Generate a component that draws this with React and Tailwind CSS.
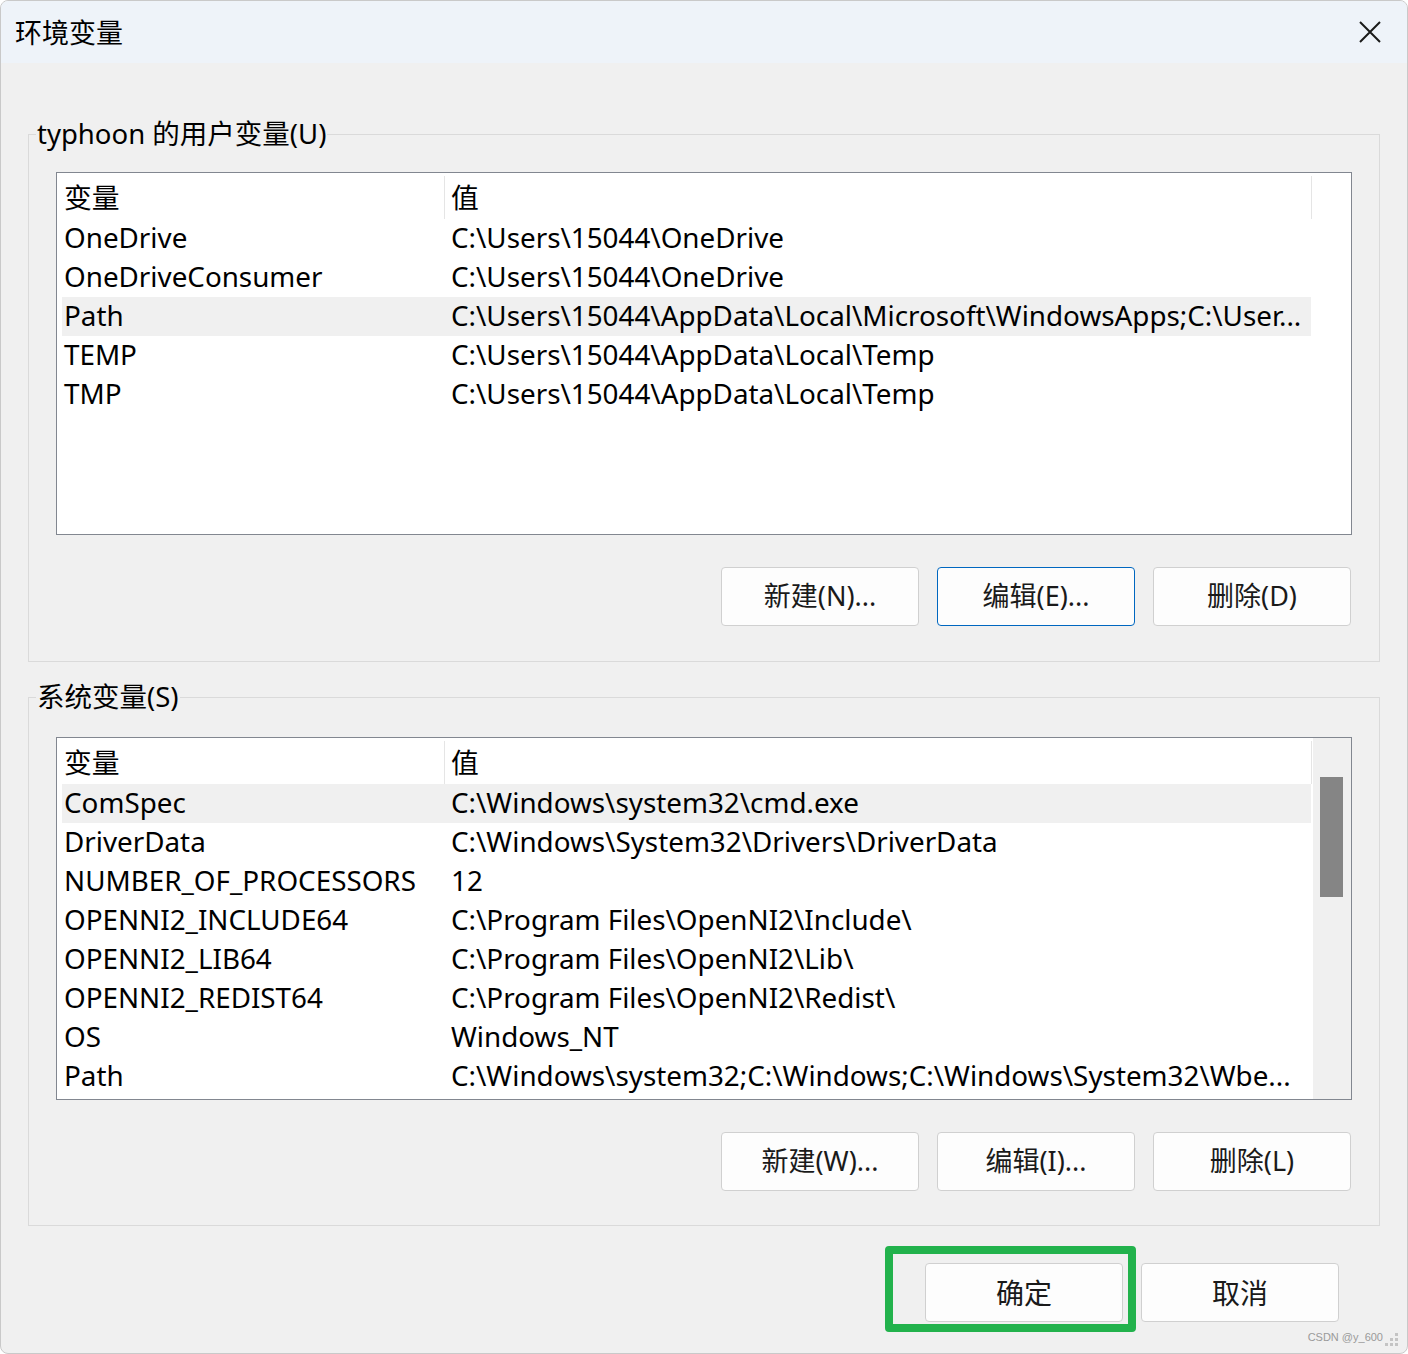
import React from 'react';

const FONT = "font-['Noto_Sans','Noto_Sans_CJK_SC',sans-serif]";

const userVars = [
  ['OneDrive', 'C:\\Users\\15044\\OneDrive'],
  ['OneDriveConsumer', 'C:\\Users\\15044\\OneDrive'],
  ['Path', 'C:\\Users\\15044\\AppData\\Local\\Microsoft\\WindowsApps;C:\\User...'],
  ['TEMP', 'C:\\Users\\15044\\AppData\\Local\\Temp'],
  ['TMP', 'C:\\Users\\15044\\AppData\\Local\\Temp'],
];

const systemVars = [
  ['ComSpec', 'C:\\Windows\\system32\\cmd.exe'],
  ['DriverData', 'C:\\Windows\\System32\\Drivers\\DriverData'],
  ['NUMBER_OF_PROCESSORS', '12'],
  ['OPENNI2_INCLUDE64', 'C:\\Program Files\\OpenNI2\\Include\\'],
  ['OPENNI2_LIB64', 'C:\\Program Files\\OpenNI2\\Lib\\'],
  ['OPENNI2_REDIST64', 'C:\\Program Files\\OpenNI2\\Redist\\'],
  ['OS', 'Windows_NT'],
  ['Path', 'C:\\Windows\\system32;C:\\Windows;C:\\Windows\\System32\\Wbe...'],
];

function Button({ children, focused, className = '' }) {
  return (
    <button
      type="button"
      className={`h-[59px] w-[198px] rounded-[4px] border bg-[#fdfdfd] text-[27px] text-[#1a1a1a] ${focused ? 'border-[#0067c0]' : 'border-[#d0d0d0]'} ${className}`}
    >
      {children}
    </button>
  );
}

function VarList({ rows, selected, scrollbar }) {
  return (
    <div className="flex h-[363px] w-[1296px] overflow-hidden border border-[#828790] bg-white text-[27.8px]">
      <div className="w-[1255px] shrink-0">
        {/* Header */}
        <div className="flex h-[46px] items-center pt-[2px]">
          <div className="h-[43px] w-[388px] border-r border-[#e5e5e5] pl-[7px] leading-[43px]">变量</div>
          <div className="h-[43px] flex-1 border-r border-[#e5e5e5] pl-[6px] leading-[43px]">值</div>
        </div>
        {rows.map(([name, value], i) => (
          <div
            key={name + i}
            className={`ml-[5px] mr-[1px] flex h-[39px] items-center whitespace-nowrap pb-[1px] ${i === selected ? 'bg-[#f0f0f0]' : ''}`}
          >
            <div className="w-[382px] shrink-0 pl-[2px]">{name}</div>
            <div className="flex-1 overflow-hidden pl-[7px]">{value}</div>
          </div>
        ))}
      </div>
      {scrollbar ? (
        <div className="flex-1 border-l border-white bg-[#f0f0f0] pt-[39px] pl-[7px]">
          <div className="h-[120px] w-[23px] bg-[#858585]" />
        </div>
      ) : (
        <div className="flex-1" />
      )}
    </div>
  );
}

function Group({ title, children, className = '' }) {
  return (
    <fieldset className={`mx-[27px] border border-[#dadada] px-[27px] ${className}`}>
      <legend className="-ml-[20px] px-[1px] text-[27.5px] leading-[36px]">{title}</legend>
      {children}
    </fieldset>
  );
}

export default function App() {
  return (
    <div className={`h-[1354px] w-[1408px] bg-white ${FONT} text-[27px] text-black`}>
      <div className="flex h-full flex-col overflow-hidden rounded-[8px] border border-[#c9c9c9] bg-[#f0f0f0]">
        {/* Title bar */}
        <div className="flex h-[62px] shrink-0 items-center justify-between bg-[#eef3f9] pl-[14px] pr-[26px]">
          <span className="text-[27px] leading-none">环境变量</span>
          <svg width="22" height="22" viewBox="0 0 22 22" className="text-[#1a1a1a]">
            <path d="M1 1 L21 21 M21 1 L1 21" stroke="currentColor" strokeWidth="2" />
          </svg>
        </div>

        {/* User variables */}
        <Group title="typhoon 的用户变量(U)" className="mt-[53px] pt-[20px] pb-[35px]">
          <VarList rows={userVars} selected={2} />
          <div className="mt-[32px] flex justify-end gap-[18px] pr-[1px]">
            <Button>新建(N)...</Button>
            <Button focused>编辑(E)...</Button>
            <Button>删除(D)</Button>
          </div>
        </Group>

        {/* System variables */}
        <Group title="系统变量(S)" className="mt-[17px] pt-[22px] pb-[34px]">
          <VarList rows={systemVars} selected={0} scrollbar />
          <div className="mt-[32px] flex justify-end gap-[18px] pr-[1px]">
            <Button>新建(W)...</Button>
            <Button>编辑(I)...</Button>
            <Button>删除(L)</Button>
          </div>
        </Group>

        {/* Dialog buttons */}
        <div className="mt-[37px] flex justify-end gap-[18px] pr-[68px]">
          <div className="relative">
            <Button className="text-[28px]">确定</Button>
            {/* highlight annotation */}
            <div className="pointer-events-none absolute -left-[40px] -top-[17px] h-[86px] w-[251px] rounded-[4px] border-[8px] border-[#22b24c]" />
          </div>
          <Button className="text-[28px]">取消</Button>
        </div>

        <div className="mt-auto flex items-end justify-end gap-[2px] pb-[6px] pr-[8px]">
          <span className="mb-[4px] font-['Liberation_Sans',sans-serif] text-[11px] leading-none text-[#9a9a9a]">CSDN @y_600</span>
          <svg width="14" height="14" viewBox="0 0 14 14" className="text-[#c4c4c4]">
            <rect x="10" y="0" width="3" height="3" fill="currentColor" />
            <rect x="5" y="5" width="3" height="3" fill="currentColor" />
            <rect x="10" y="5" width="3" height="3" fill="currentColor" />
            <rect x="0" y="10" width="3" height="3" fill="currentColor" />
            <rect x="5" y="10" width="3" height="3" fill="currentColor" />
            <rect x="10" y="10" width="3" height="3" fill="currentColor" />
          </svg>
        </div>
      </div>
    </div>
  );
}
